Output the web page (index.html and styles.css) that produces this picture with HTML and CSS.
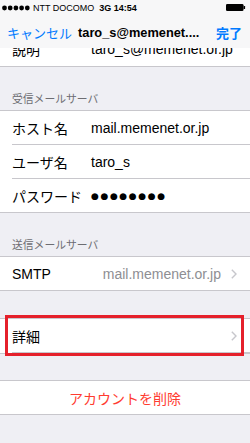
FILE: index.html
```html
<!DOCTYPE html>
<html lang="ja">
<head>
<meta charset="utf-8">
<link rel="stylesheet" href="styles.css">
</head>
<body>
<div class="screen">
  <div class="content">
    <div class="section first">
      <div class="row"><div class="row-in"><span class="label">説明</span><span class="value">taro_s@memenet.or.jp</span></div></div>
    </div>
    <div class="header">受信メールサーバ</div>
    <div class="section">
      <div class="row"><div class="row-in"><span class="label">ホスト名</span><span class="value">mail.memenet.or.jp</span></div></div>
      <div class="row"><div class="row-in"><span class="label">ユーザ名</span><span class="value">taro_s</span></div></div>
      <div class="row"><div class="row-in"><span class="label">パスワード</span><span class="value dots">●●●●●●●●</span></div></div>
    </div>
    <div class="header">送信メールサーバ</div>
    <div class="section">
      <div class="row"><div class="row-in"><span class="label">SMTP</span><span class="detail">mail.memenet.or.jp</span><svg class="chev" width="6" height="10" viewBox="0 0 6 10"><polyline points="0.8,0.8 5,5 0.8,9.2" fill="none" stroke="#c7c7cc" stroke-width="1.4"/></svg></div></div>
    </div>
    <div class="section gap27 marked">
      <div class="row"><div class="row-in"><span class="label">詳細</span><span class="spacer"></span><svg class="chev" width="6" height="10" viewBox="0 0 6 10"><polyline points="0.8,0.8 5,5 0.8,9.2" fill="none" stroke="#c7c7cc" stroke-width="1.4"/></svg></div></div>
      <div class="mark"></div>
    </div>
    <div class="section gap26">
      <div class="row center"><span class="delete">アカウントを削除</span></div>
    </div>
  </div>
  <div class="topbar">
    <div class="status">
      <svg class="signal" width="30" height="6" viewBox="0 0 30 6"><circle cx="3.5" cy="3" r="2.4"/><circle cx="9.2" cy="3" r="2.4"/><circle cx="14.9" cy="3" r="2.4"/><circle cx="20.6" cy="3" r="2.4"/><circle cx="26.3" cy="3" r="2.4"/></svg>
      <span class="carrier">NTT DOCOMO</span>
      <span class="time">3G 14:54</span>
      <svg class="battery" width="20" height="7" viewBox="0 0 20 7"><rect x="0" y="0" width="17.5" height="7" rx="1.3" fill="#000"/><rect x="17.5" y="2" width="1.6" height="3" rx="0.5" fill="#000"/></svg>
    </div>
    <div class="nav">
      <span class="nav-btn">キャンセル</span>
      <span class="nav-title">taro_s@memenet....</span>
      <span class="nav-btn done">完了</span>
    </div>
  </div>
</div>
</body>
</html>
```
FILE: styles.css
```css
html, body {
  margin: 0;
  padding: 0;
}
body {
  background: #efeff4;
  font-family: "Liberation Sans", "Noto Sans CJK JP", sans-serif;
  color: #000;
}
.screen {
  position: relative;
  width: 250px;
  height: 443px;
  overflow: hidden;
  background: #efeff4;
}
.content {
  padding-top: 32px;
}
.topbar {
  position: absolute;
  top: 0;
  left: 0;
  right: 0;
  height: 48px;
  background: #f7f7f8;
}
.status {
  height: 16px;
  display: flex;
  align-items: center;
  padding: 0 4px 1px 1px;
  box-sizing: border-box;
  font-size: 9px;
}
.signal {
  fill: #000;
  margin-right: 2px;
}
.carrier {
  margin-right: 5px;
}
.time {
  font-weight: bold;
}
.battery {
  margin-left: auto;
}
.nav {
  height: 32px;
  display: flex;
  align-items: center;
  padding: 0 8px 0 7px;
}
.nav-btn {
  color: #007aff;
  font-size: 13px;
  font-family: "Noto Sans CJK JP", sans-serif;
}
.nav-btn.done {
  margin-left: auto;
  font-weight: 700;
}
.nav-title {
  margin-left: 6px;
  font-weight: bold;
  font-size: 12.8px;
  white-space: nowrap;
}
.section {
  position: relative;
  background: #fff;
  border-top: 1px solid #c8c7cc;
  border-bottom: 1px solid #c8c7cc;
}
.section.first {
  border-top: none;
}
.gap27 {
  margin-top: 27px;
}
.gap26 {
  margin-top: 26px;
}
.row {
  height: 34px;
  padding-left: 12px;
  box-sizing: border-box;
}
.row:last-of-type {
  height: 33px;
}
.section.first .row {
  height: 34px;
}
.row-in {
  height: 100%;
  display: flex;
  align-items: center;
  padding-right: 13px;
  border-bottom: 1px solid #c8c7cc;
  box-sizing: border-box;
}
.row:last-of-type .row-in {
  border-bottom: none;
}
.label {
  width: 79px;
  flex: none;
  font-size: 14px;
  white-space: nowrap;
}
.value {
  font-size: 14px;
  white-space: nowrap;
}
.dots {
  font-family: "DejaVu Sans", sans-serif;
  font-size: 9px;
  letter-spacing: 1.6px;
}
.detail {
  margin-left: auto;
  font-size: 14px;
  color: #8e8e93;
  margin-right: 10px;
  white-space: nowrap;
}
.spacer {
  flex: 1;
}
.chev {
  display: block;
  flex: none;
}
.row.center {
  padding-left: 0;
  display: flex;
  align-items: center;
  justify-content: center;
}
.delete {
  color: #ff3b30;
  font-size: 14px;
  font-family: "Noto Sans CJK JP", sans-serif;
}
.header {
  height: 43px;
  box-sizing: border-box;
  display: flex;
  align-items: flex-end;
  padding: 0 0 5px 12px;
  font-size: 10.8px;
  line-height: 13px;
  color: #6d6d72;
  font-family: "Noto Sans CJK JP", sans-serif;
}
.mark {
  position: absolute;
  top: -4px;
  bottom: -3px;
  left: 5px;
  right: 6px;
  border: 3px solid #e5202b;
  pointer-events: none;
}
```
